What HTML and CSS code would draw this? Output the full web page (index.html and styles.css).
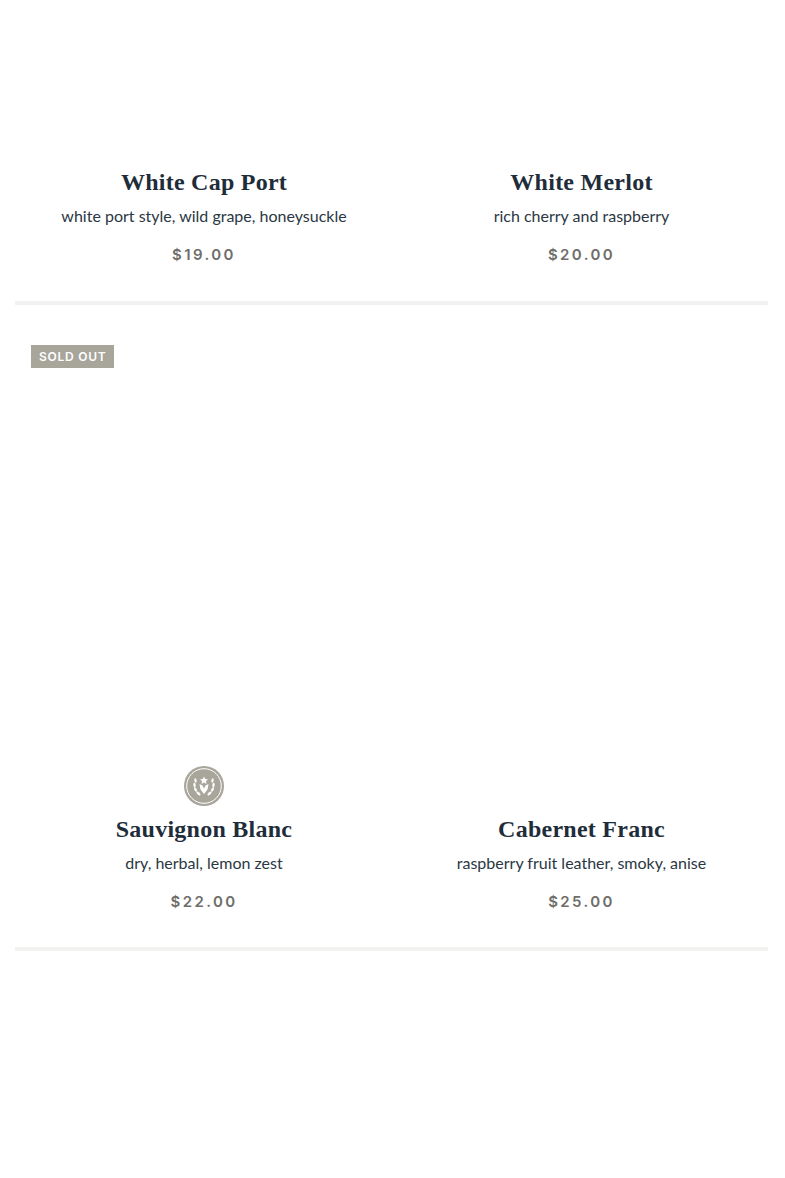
FILE: index.html
```html
<!DOCTYPE html>
<html lang="en">
<head>
<meta charset="utf-8">
<title>Wines</title>
<link rel="stylesheet" href="styles.css">
</head>
<body>
<main class="catalog">
  <section class="row">
    <article class="product">
      <div class="media media-short"></div>
      <h2 class="name">White Cap Port</h2>
      <p class="desc">white port style, wild grape, honeysuckle</p>
      <p class="price">$19.00</p>
    </article>
    <article class="product">
      <div class="media media-short"></div>
      <h2 class="name">White Merlot</h2>
      <p class="desc">rich cherry and raspberry</p>
      <p class="price">$20.00</p>
    </article>
  </section>
  <section class="row row-last">
    <article class="product">
      <span class="badge">SOLD OUT</span>
      <div class="media media-tall">
        <svg class="crest" viewBox="0 0 40 40" width="40" height="40" aria-hidden="true">
          <circle cx="20" cy="20" r="20" fill="#a8a59b"/>
          <circle cx="20" cy="20" r="17.300" fill="none" stroke="#fff" stroke-width="1"/>
          <path d="M20 10.500l1.200 2.600 2.800.3-2.100 1.900.6 2.700-2.500-1.400-2.500 1.400.6-2.700-2.100-1.900 2.800-.3z" fill="#fff"/>
          <path d="M15.500 18l3 1.500 1.500 3 1.500-3 3-1.500-1 5.500-3.500 4.500-3.500-4.500z" fill="#fff"/>
          <g fill="#fff">
            <ellipse cx="11.500" cy="14.500" rx="1.100" ry="2.300" transform="rotate(-10 11.500 14.500)"/>
            <ellipse cx="10.500" cy="19" rx="1.200" ry="2.300" transform="rotate(-5 10.500 19)"/>
            <ellipse cx="11.500" cy="23.500" rx="1.200" ry="2.400" transform="rotate(-25 11.500 23.500)"/>
            <ellipse cx="14.500" cy="27.500" rx="1.200" ry="2.500" transform="rotate(-50 14.500 27.500)"/>
            <ellipse cx="28.500" cy="14.500" rx="1.100" ry="2.300" transform="rotate(10 28.500 14.500)"/>
            <ellipse cx="29.500" cy="19" rx="1.200" ry="2.300" transform="rotate(5 29.500 19)"/>
            <ellipse cx="28.500" cy="23.500" rx="1.200" ry="2.400" transform="rotate(25 28.500 23.500)"/>
            <ellipse cx="25.500" cy="27.500" rx="1.200" ry="2.500" transform="rotate(50 25.500 27.500)"/>
          </g>
        </svg>
      </div>
      <h2 class="name">Sauvignon Blanc</h2>
      <p class="desc">dry, herbal, lemon zest</p>
      <p class="price">$22.00</p>
    </article>
    <article class="product">
      <div class="media media-tall"></div>
      <h2 class="name">Cabernet Franc</h2>
      <p class="desc">raspberry fruit leather, smoky, anise</p>
      <p class="price">$25.00</p>
    </article>
  </section>
</main>
</body>
</html>
```
FILE: styles.css
```css
* { box-sizing: border-box; }
html, body { margin: 0; background: #fff; }
body { height: 1178px; overflow: hidden; }
.catalog { padding-left: 15px; }
.row {
  display: grid;
  grid-template-columns: 378px 377px;
  width: 753px;
  border-bottom: 4px solid #f2f2f1;
  padding-bottom: 35px;
  margin-bottom: 40px;
}
.row-last { padding-bottom: 34px; }
.product {
  position: relative;
  text-align: center;
  display: flex;
  flex-direction: column;
  align-items: center;
}
.media { width: 100%; display: flex; align-items: flex-end; justify-content: center; }
.media-short { height: 167px; }
.media-tall { height: 469px; }
.crest { display: block; margin-bottom: 8px; }
.badge {
  position: absolute;
  left: 16px;
  top: 0;
  height: 23px;
  padding: 0 8px;
  background: #a8a59b;
  color: #fff;
  font: 600 12px/23px "Inter", "Liberation Sans", sans-serif;
  letter-spacing: 0.75px;
}
.name {
  margin: 0;
  font: 700 24px/30px "Liberation Serif", serif;
  letter-spacing: 0.25px;
  color: #1f2d3a;
}
.desc {
  margin: 8px 0 0;
  font: 400 16px/22px "Lato", "Open Sans", sans-serif;
  color: #2b3743;
}
.price {
  margin: 17px 0 0;
  font: 600 15px/22px "Inter", "Liberation Sans", sans-serif;
  letter-spacing: 2.4px;
  color: #6f6e6a;
}
```
